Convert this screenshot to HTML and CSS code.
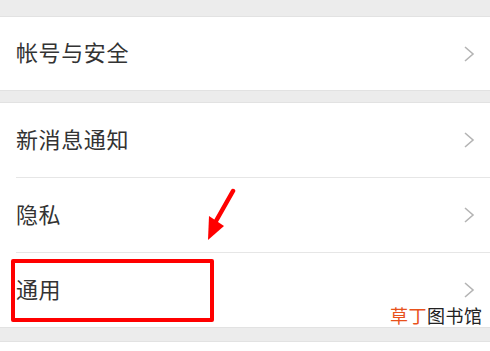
FILE: index.html
```html
<!DOCTYPE html>
<html lang="zh">
<head>
<meta charset="utf-8">
<link rel="stylesheet" href="styles.css">
</head>
<body>
<div class="page">
  <div class="spacer-top"></div>
  <div class="group">
    <div class="row row-first"><span class="label">帐号与安全</span><svg class="chev" viewBox="0 0 12 18"><path d="M2 2 L10 9 L2 16" /></svg></div>
  </div>
  <div class="spacer"></div>
  <div class="group">
    <div class="row"><span class="label">新消息通知</span><svg class="chev" viewBox="0 0 12 18"><path d="M2 2 L10 9 L2 16" /></svg></div>
    <div class="row"><span class="label">隐私</span><svg class="chev" viewBox="0 0 12 18"><path d="M2 2 L10 9 L2 16" /></svg></div>
    <div class="row"><span class="label">通用</span><svg class="chev" viewBox="0 0 12 18"><path d="M2 2 L10 9 L2 16" /></svg></div>
  </div>
  <div class="spacer spacer-bottom"></div>
  <div class="group tail"></div>

  <div class="highlight"></div>
  <svg class="arrow" viewBox="0 0 40 56">
    <path d="M31 3 L14 33" stroke="#ff0000" stroke-width="4.5" stroke-linecap="round" fill="none"/>
    <path d="M6 52 L7 28 L22 38 Z" fill="#ff0000"/>
  </svg>
  <div class="watermark"><span class="wm-orange">草丁</span><span class="wm-dark">图书馆</span></div>
</div>
</body>
</html>
```

FILE: styles.css
```css
html, body {
  margin: 0;
  padding: 0;
}
body {
  background: #ececec;
  font-family: "Noto Sans CJK SC", "Noto Sans", sans-serif;
  overflow: hidden;
}
.page {
  position: relative;
  width: 490px;
  height: 351px;
}
.spacer-top {
  height: 16px;
}
.spacer {
  height: 11px;
}
.spacer-bottom {
  height: 13px;
}
.group {
  background: #ffffff;
  border-top: 1px solid #e2e2e2;
  border-bottom: 1px solid #e2e2e2;
}
.group.tail {
  height: 12px;
  border-bottom: none;
}
.row {
  height: 74px;
  margin-left: 16px;
  padding-right: 15px;
  display: flex;
  align-items: center;
  justify-content: space-between;
}
.row-first {
  height: 73px;
}
.group .row + .row {
  border-top: 1px solid #e6e6e6;
}
.label {
  font-size: 22px;
  line-height: 30px;
  padding-bottom: 5px;
  color: #333333;
  letter-spacing: 0.6px;
}
.chev {
  width: 12px;
  height: 18px;
}
.chev path {
  fill: none;
  stroke: #b4b4b4;
  stroke-width: 1.6;
}
.highlight {
  position: absolute;
  left: 11px;
  top: 259px;
  width: 195px;
  height: 55px;
  border: 4px solid #ff0000;
  border-radius: 2px;
}
.arrow {
  position: absolute;
  left: 202px;
  top: 188px;
  width: 40px;
  height: 56px;
}
.watermark {
  position: absolute;
  left: 390px;
  top: 303px;
  font-size: 18px;
  line-height: 24px;
  letter-spacing: 0.5px;
}
.wm-orange {
  color: #e8521c;
}
.wm-dark {
  color: #222222;
}
```
